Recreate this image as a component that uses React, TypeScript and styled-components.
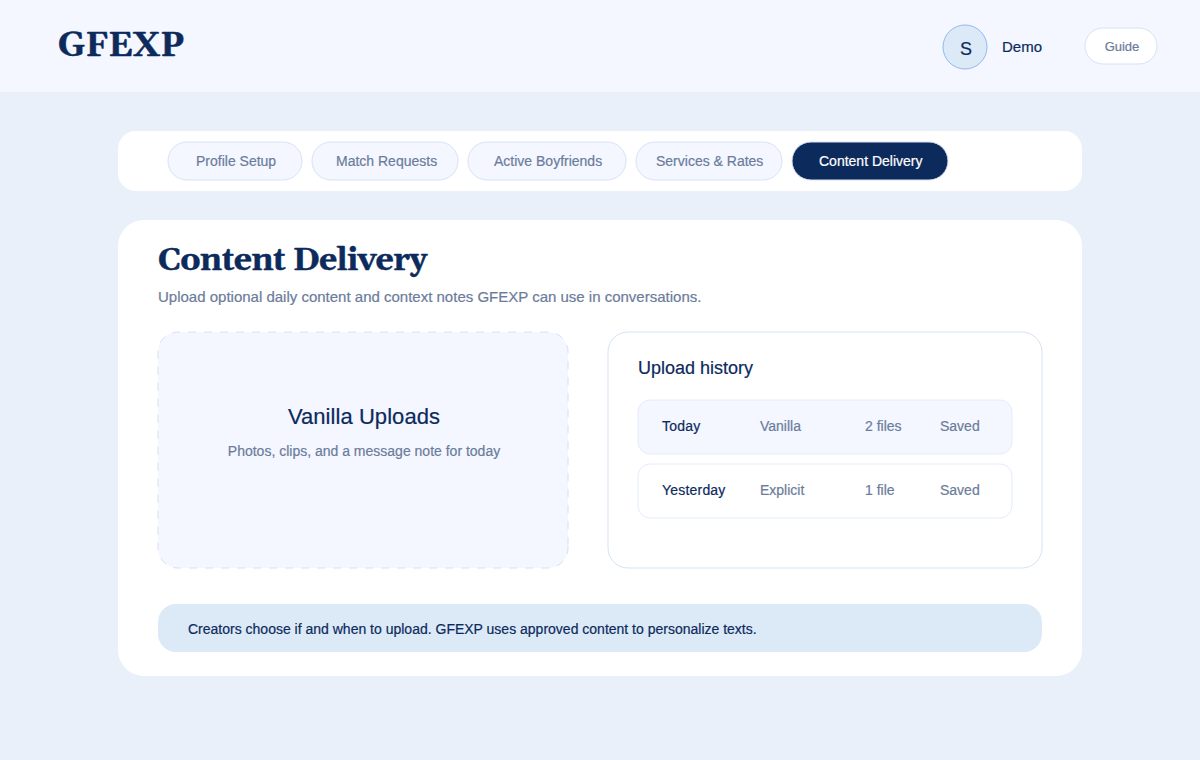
import React from "react";
import styled, { createGlobalStyle, css } from "styled-components";

const navy = "#0d2a5c";
const slate = "#6b7c9b";
const mist = "#f4f7ff";
const sky = "#dceaf7";
const line = "#d5e3f4";
const faintLine = "#e3ecfa";

const GlobalStyle = createGlobalStyle`
  *, *::before, *::after { box-sizing: border-box; }
  html, body { margin: 0; padding: 0; }
  body {
    background: #e9f0fa;
    color: ${navy};
    font-family: Helvetica, "Liberation Sans", Arial, sans-serif;
    font-size: 14px;
    line-height: 1;
    -webkit-text-stroke: 0.2px currentColor;
  }
  h1, h2, h3, p { margin: 0; font-weight: 400; }
`;

/* Fill and hairline drawn on a half-pixel grid, for soft edges behind the content. */
const softFrame = (fill: string, stroke: string, radius: string) => css`
  position: relative;
  isolation: isolate;
  &::before {
    content: "";
    position: absolute;
    z-index: -1;
    inset: 0 1px 1px 0;
    border: 1px solid ${stroke};
    border-radius: ${radius};
    background: ${fill};
    transform: translate(0.5px, 0.5px);
  }
`;

const Page = styled.div`
  width: 1200px;
  height: 760px;
  overflow: hidden;
`;

const Header = styled.header`
  display: flex;
  align-items: center;
  height: 92px;
  padding: 0 42px 0 58px;
  background: ${mist};
`;

const Logo = styled.h1`
  flex: 1;
  font-family: Georgia, Gelasio, "Liberation Serif", serif;
  font-size: 34px;
  font-weight: 700;
  line-height: 40px;
  -webkit-text-stroke: 0.5px currentColor;
`;

const Avatar = styled.div`
  ${softFrame(sky, "#8fb8ee", "50%")}
  display: flex;
  align-items: center;
  justify-content: center;
  width: 46px;
  height: 46px;
  margin: 2px 14px 0 0;
  padding: 3px 0 0 2px;
  font-size: 18px;
`;

const UserName = styled.span`
  width: 82px;
  font-size: 15px;
`;

const GuideButton = styled.button`
  ${softFrame("#fff", line, "18.5px")}
  width: 74px;
  height: 38px;
  padding: 0 0 0 2px;
  border: 0;
  background: none;
  color: ${slate};
  font: inherit;
  font-size: 13px;
`;

const Main = styled.main`
  width: 964px;
  margin: 39px auto 0;
`;

const Tabs = styled.nav`
  display: flex;
  align-items: center;
  gap: 8px;
  height: 60px;
  padding: 0 49px;
  border-radius: 18px;
  background: #fff;
`;

const Tab = styled.button<{ $width: number; $inset: number; $active?: boolean }>`
  ${(p) => softFrame(p.$active ? navy : mist, line, "19.5px")}
  width: ${(p) => p.$width}px;
  height: 40px;
  padding: 0 0 0 ${(p) => p.$inset}px;
  border: 0;
  background: none;
  color: ${(p) => (p.$active ? "#fff" : slate)};
  font: inherit;
  text-align: left;
  white-space: nowrap;
`;

const Card = styled.section`
  height: 456px;
  margin-top: 29px;
  padding: 21px 39px 24px;
  border-radius: 26px;
  background: #fff;
`;

const Title = styled.h2`
  padding-left: 1px;
  font-family: Georgia, Gelasio, "Liberation Serif", serif;
  font-size: 32px;
  font-weight: 700;
  letter-spacing: -0.56px;
  line-height: 40px;
  -webkit-text-stroke: 0.5px currentColor;
`;

const Subtitle = styled.p`
  padding: 7px 0 0 1px;
  color: ${slate};
  font-size: 15px;
  line-height: 17px;
`;

const Columns = styled.div`
  display: grid;
  grid-template-columns: 412px 436px;
  gap: 38px;
  height: 238px;
  margin-top: 26px;
`;

const DropZone = styled.div`
  position: relative;
  display: flex;
  flex-direction: column;
  align-items: center;
  padding: 73px 0 0 2px;
`;

const DropOutline = styled.svg`
  position: absolute;
  inset: 0;
`;

const DropTitle = styled.h3`
  position: relative;
  font-size: 22px;
  letter-spacing: 0.06px;
  line-height: 26px;
`;

const DropHint = styled.p`
  position: relative;
  margin-top: 13px;
  color: ${slate};
  line-height: 16px;
`;

const History = styled.div`
  ${softFrame("#fff", line, "20.5px")}
  display: flex;
  flex-direction: column;
  gap: 8px;
  padding: 27px 30px 0;
`;

const HistoryTitle = styled.h3`
  height: 33px;
  padding-left: 1px;
  font-size: 18px;
  line-height: 20px;
`;

const HistoryRow = styled.div<{ $shaded?: boolean }>`
  ${(p) => softFrame(p.$shaded ? mist : "#fff", faintLine, "12.5px")}
  display: grid;
  grid-template-columns: 98px 105px 75px auto;
  align-items: center;
  height: 56px;
  padding: 0 0 2px 25px;
  color: ${slate};
`;

const Day = styled.span`
  color: ${navy};
  letter-spacing: 0.2px;
`;

const Notice = styled.p`
  display: flex;
  align-items: center;
  height: 48px;
  margin: 35px 1px 0;
  padding: 2px 30px 0;
  border-radius: 18px;
  background: ${sky};
`;

const tabs = [
  { label: "Profile Setup", width: 136, inset: 29 },
  { label: "Match Requests", width: 148, inset: 25 },
  { label: "Active Boyfriends", width: 160, inset: 27 },
  { label: "Services & Rates", width: 148, inset: 21 },
  { label: "Content Delivery", width: 158, inset: 28 },
];

const uploads = [
  { day: "Today", kind: "Vanilla", count: "2 files" },
  { day: "Yesterday", kind: "Explicit", count: "1 file" },
];

export default function App() {
  return (
    <Page>
      <GlobalStyle />
      <Header>
        <Logo>GFEXP</Logo>
        <Avatar>S</Avatar>
        <UserName>Demo</UserName>
        <GuideButton>Guide</GuideButton>
      </Header>
      <Main>
        <Tabs>
          {tabs.map((t, i) => (
            <Tab key={t.label} $width={t.width} $inset={t.inset} $active={i === 4}>
              {t.label}
            </Tab>
          ))}
        </Tabs>
        <Card>
          <Title>Content Delivery</Title>
          <Subtitle>Upload optional daily content and context notes GFEXP can use in conversations.</Subtitle>
          <Columns>
            <DropZone>
              <DropOutline width="412" height="238">
                <path
                  d="M411 215V217A20 20 0 0 1 391 237H21A20 20 0 0 1 1 217V21A20 20 0 0 1 21 1H391A20 20 0 0 1 411 21Z"
                  fill={mist}
                  stroke="#d3e1f1"
                  strokeDasharray="8 8"
                />
              </DropOutline>
              <DropTitle>Vanilla Uploads</DropTitle>
              <DropHint>Photos, clips, and a message note for today</DropHint>
            </DropZone>
            <History>
              <HistoryTitle>Upload history</HistoryTitle>
              {uploads.map((u, i) => (
                <HistoryRow key={u.day} $shaded={i === 0}>
                  <Day>{u.day}</Day>
                  <span>{u.kind}</span>
                  <span>{u.count}</span>
                  <span>Saved</span>
                </HistoryRow>
              ))}
            </History>
          </Columns>
          <Notice>Creators choose if and when to upload. GFEXP uses approved content to personalize texts.</Notice>
        </Card>
      </Main>
    </Page>
  );
}
